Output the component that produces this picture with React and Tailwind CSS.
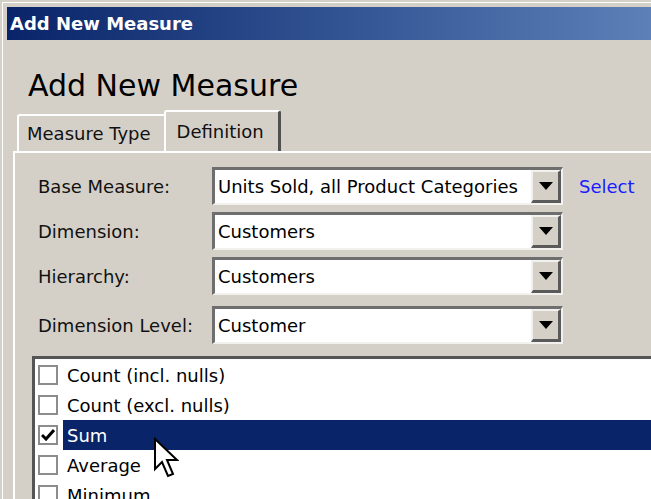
import React from 'react'

const font = { fontFamily: '"DejaVu Sans", Tahoma, sans-serif' }

const Combo = ({ value }) => (
    <div className="flex h-[38px] w-[351px] border-t-[3px] border-l-[3px] border-b-[2px] border-r-[2px] border-t-[#6e6e6e] border-l-[#6e6e6e] border-b-[#f2f1ee] border-r-[#f2f1ee] bg-white">
        <div className="flex flex-1 items-center pl-[3px] text-[18px] text-black">{value}</div>
        <div className="flex w-[30px] items-center justify-center border-t-2 border-l-2 border-b-[3px] border-r-[3px] border-t-[#f2f1ee] border-l-[#f2f1ee] border-b-[#5a5a5a] border-r-[#5a5a5a] bg-[#d4d0c8]">
            <svg width="14" height="8" viewBox="0 0 14 8"><path d="M0 0 H14 L7 8 Z" fill="#000" /></svg>
        </div>
    </div>
)

const Row = ({ label, value, extra, gap }) => (
    <div className={`flex items-center ${gap}`}>
        <div className="w-[174px] text-[18px] text-[#111]">{label}</div>
        <Combo value={value} />
        {extra}
    </div>
)

const Item = ({ label, checked, selected }) => (
    <div className="flex h-[30px] items-center">
        <div className="ml-[3px] flex h-[20px] w-[20px] items-center justify-center border-2 border-[#8c8c8c] bg-white">
            {checked && (
                <svg width="14" height="12" viewBox="0 0 14 12"><path d="M1 6 L5 10 L13 1" stroke="#000" strokeWidth="3" fill="none" /></svg>
            )}
        </div>
        <div className={`ml-[5px] flex h-[30px] flex-1 items-center pl-[4px] text-[18px] ${selected ? 'bg-[#0a246a] text-white' : 'text-black'}`}>
            {label}
        </div>
    </div>
)

export default function App() {
    return (
        <div className="relative h-[499px] w-[651px] overflow-hidden bg-[#d4d0c8] pt-[2px] pl-[2px]" style={font}>
            <div className="h-full border-t border-l border-white pt-[4px] pl-[4px]">
                {/* title bar */}
                <div className="flex h-[33px] items-center bg-gradient-to-r from-[#0a246a] to-[#5d80b8] pl-[3px] text-[18px] font-bold text-white">
                    Add New Measure
                </div>

                <div className="pl-[21px] pt-[31px] text-[30px] leading-[30px] text-black">Add New Measure</div>

                {/* tabs */}
                <div className="mt-[9px] flex items-end pl-[10px]">
                    <div className="flex h-[37px] items-center rounded-t-[3px] border-t-2 border-l-2 border-white pl-[8px] pr-[15px] text-[18px] text-[#111]">
                        Measure Type
                    </div>
                    <div className="-ml-[2px] flex h-[41px] items-center rounded-t-[3px] border-t-2 border-l-2 border-r-[3px] border-t-white border-l-white border-r-[#505050] pl-[11px] pr-[14px] text-[18px] text-[#111]">
                        Definition
                    </div>
                </div>

                {/* panel */}
                <div className="ml-[6px] h-[400px] border-t-2 border-l-2 border-white pl-[23px] pt-[14px]">
                    <Row
                        label="Base Measure:"
                        value="Units Sold, all Product Categories"
                        extra={<span className="ml-[16px] text-[18px] text-[#1a1aff]">Select</span>}
                        gap=""
                    />
                    <Row label="Dimension:" value="Customers" gap="mt-[7px]" />
                    <Row label="Hierarchy:" value="Customers" gap="mt-[7px]" />
                    <Row label="Dimension Level:" value="Customer" gap="mt-[11px]" />

                    {/* list */}
                    <div className="-ml-[6px] mt-[12px] border-t-[3px] border-l-[3px] border-t-[#555] border-l-[#555] bg-white pt-[1px]">
                        <Item label="Count (incl. nulls)" />
                        <Item label="Count (excl. nulls)" />
                        <Item label="Sum" checked selected />
                        <Item label="Average" />
                        <Item label="Minimum" />
                    </div>
                </div>
            </div>

            {/* mouse cursor */}
            <svg className="absolute left-[153px] top-[437px]" width="26" height="42" viewBox="0 0 13 21">
                <path d="M1 1 V16 L4.5 12.5 L7.5 19.5 L10 18.5 L7 11.5 H12 Z" fill="#fff" stroke="#000" strokeWidth="1" strokeLinejoin="miter" />
            </svg>
        </div>
    )
}
